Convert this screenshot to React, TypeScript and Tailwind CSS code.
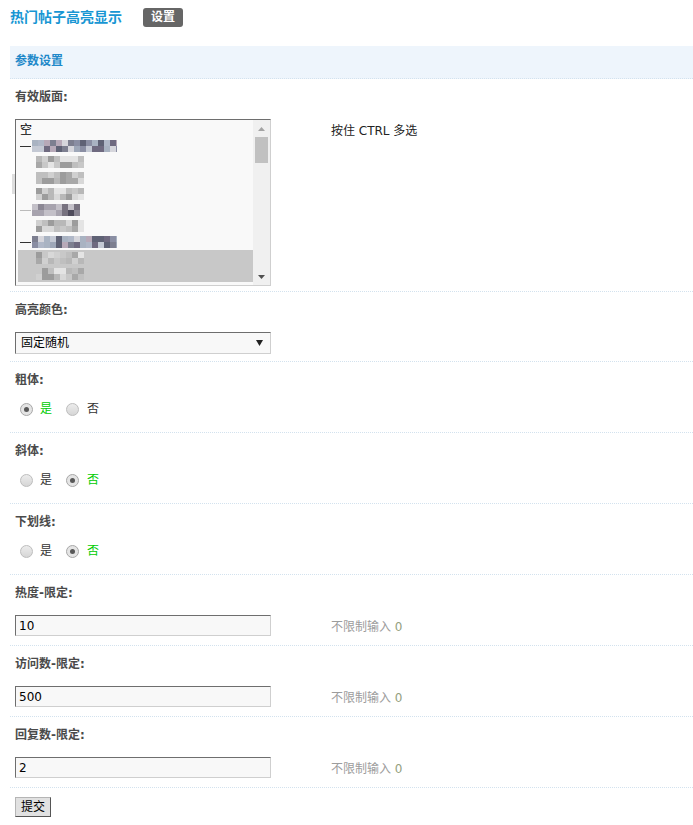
import React from "react";

type Tone = "light" | "mixed" | "dark";

const PALETTES: Record<Tone, string[]> = {
  light: ["#c8c8c8", "#b8b8b8", "#d8d8d8", "#a8a8a8", "#e4e4e4", "#bfbfbf", "#9c9c9c", "#d0d0d0"],
  mixed: ["#9ea7b8", "#7d7f90", "#b7a9b8", "#8a8ea3", "#c4c9d4", "#6f6a80", "#a9b3c2", "#d6d6dc", "#5f6275", "#b0b8c8"],
  dark: ["#8b8794", "#5d5a6b", "#a7a3ae", "#c3c0c8", "#77727f", "#4f4c5c"],
};

// Pixelated placeholder for board names that are hidden in the list
function Mosaic({ w, seed, tone }: { w: number; seed: number; tone: Tone }) {
  const cols = Math.ceil(w / 6);
  let s = seed;
  const rnd = () => {
    s = (s * 9301 + 49297) % 233280;
    return s / 233280;
  };
  const cells: React.ReactNode[] = [];
  const pal = PALETTES[tone];
  for (let r = 0; r < 2; r++) {
    for (let c = 0; c < cols; c++) {
      cells.push(
        <rect key={`${r}-${c}`} x={c * 6} y={r * 6} width={6} height={6} fill={pal[Math.floor(rnd() * pal.length)]} />
      );
    }
  }
  return (
    <svg width={w} height={12} className="block shrink-0">
      {cells}
    </svg>
  );
}

type Item = { text?: string; dash?: "dark" | "light"; indent?: boolean; w?: number; tone?: Tone; seed?: number; selected?: boolean };

const BOARDS: Item[] = [
  { text: "空" },
  { dash: "dark", w: 85, tone: "mixed", seed: 11 },
  { indent: true, w: 48, tone: "light", seed: 23 },
  { indent: true, w: 48, tone: "light", seed: 37 },
  { indent: true, w: 48, tone: "light", seed: 41 },
  { dash: "light", w: 48, tone: "dark", seed: 59 },
  { indent: true, w: 48, tone: "light", seed: 67 },
  { dash: "dark", w: 85, tone: "mixed", seed: 73 },
  { indent: true, w: 48, tone: "light", seed: 89, selected: true },
  { indent: true, w: 48, tone: "light", seed: 97, selected: true },
];

function BoardList() {
  return (
    <div className="relative flex h-[167px] w-[256px] border border-t-[#6e6e6e] border-l-[#6e6e6e] border-r-[#cfcfcf] border-b-[#cfcfcf] bg-[#f9f9f9]">
      <span className="absolute left-[-4px] top-[54px] h-[20px] w-[3px] bg-[#dedede]" />
      <div className="flex-1 overflow-hidden pl-[2px] pt-[2px]">
        {BOARDS.map((b, i) => (
          <div
            key={i}
            className={`flex h-[16px] items-center px-[2px] leading-[16px] text-black ${b.selected ? "bg-[#c8c8c8]" : ""}`}
          >
            {b.text ? (
              <span>{b.text}</span>
            ) : (
              <>
                {b.dash ? (
                  <span className={`mr-[1px] block h-[1px] w-[11px] ${b.dash === "dark" ? "bg-[#333]" : "bg-[#bbb]"}`} />
                ) : (
                  <span className="block w-[16px]" />
                )}
                <Mosaic w={b.w ?? 48} seed={b.seed ?? 1} tone={b.tone ?? "light"} />
              </>
            )}
          </div>
        ))}
      </div>
      {/* scrollbar */}
      <div className="flex w-[17px] flex-col bg-[#f0f0f0]">
        <div className="flex h-[17px] items-center justify-center">
          <svg width="7" height="4" viewBox="0 0 7 4">
            <path d="M3.5 0 L7 4 L0 4 Z" fill="#a3a3a3" />
          </svg>
        </div>
        <div className="mx-[2px] h-[26px] bg-[#c1c1c1]" />
        <div className="flex-1" />
        <div className="flex h-[17px] items-center justify-center">
          <svg width="7" height="4" viewBox="0 0 7 4">
            <path d="M0 0 L7 0 L3.5 4 Z" fill="#505050" />
          </svg>
        </div>
      </div>
    </div>
  );
}

function Dropdown({ value }: { value: string }) {
  return (
    <div className="flex h-[22px] w-[256px] items-center justify-between border border-t-[#6e6e6e] border-l-[#6e6e6e] border-r-[#cfcfcf] border-b-[#cfcfcf] bg-[#f8f8f8] pl-[5px] pr-[7px] text-black">
      <span className="leading-[20px]">{value}</span>
      <svg width="7" height="6" viewBox="0 0 7 6">
        <path d="M0 0 L7 0 L3.5 6 Z" fill="#222" />
      </svg>
    </div>
  );
}

function TextBox({ value }: { value: string }) {
  return (
    <input
      readOnly
      value={value}
      className="block h-[21px] w-[256px] border border-t-[#6e6e6e] border-l-[#6e6e6e] border-r-[#cfcfcf] border-b-[#cfcfcf] bg-[#f8f8f8] pl-[3px] text-[12px] leading-[19px] text-black outline-none"
    />
  );
}

function Radio({ checked }: { checked: boolean }) {
  return (
    <span
      className={`flex size-[13px] shrink-0 items-center justify-center rounded-full border ${
        checked ? "border-[#a8a8a8] bg-[#e4e4e4]" : "border-[#bdbdbd] bg-[linear-gradient(#ececec,#d6d6d6)]"
      }`}
    >
      {checked && <span className="size-[5px] rounded-full bg-[#585858]" />}
    </span>
  );
}

function YesNo({ yes }: { yes: boolean }) {
  return (
    <div className="flex h-[14px] items-center pl-[5px]">
      <Radio checked={yes} />
      <span className={`ml-[7px] leading-[14px] ${yes ? "text-[#00cc00]" : "text-[#333]"}`}>是</span>
      <span className="ml-[14px]">
        <Radio checked={!yes} />
      </span>
      <span className={`ml-[8px] leading-[14px] ${!yes ? "text-[#00cc00]" : "text-[#333]"}`}>否</span>
    </div>
  );
}

function Field({
  label,
  children,
  hint,
  pad,
}: {
  label: string;
  children: React.ReactNode;
  hint?: React.ReactNode;
  pad: string;
}) {
  return (
    <div className="border-b border-dotted border-[#d3e2ee]">
      <div className="pb-[13px] pl-[5px] pt-[9px] font-bold leading-[18px] text-[#4a4a4a]">{label}</div>
      <div className={`flex ${pad}`}>
        <div className="w-[315px] shrink-0 pl-[5px]">{children}</div>
        {hint && <div className="pl-[6px] pt-[4px] leading-[16px]">{hint}</div>}
      </div>
    </div>
  );
}

function NoLimit() {
  return (
    <span className="text-[#9c9c9c]">
      不限制输入 <span className="text-[#94a07e]">0</span>
    </span>
  );
}

export default function App() {
  return (
    <div className="min-h-[825px] bg-white pl-[10px] font-['DejaVu_Sans','Noto_Sans_CJK_SC',sans-serif] text-[12px] text-[#333]">
      {/* page title */}
      <div className="mt-[8px] flex h-[19px] items-center">
        <h1 className="text-[14px] font-bold leading-[19px] text-[#1896d3]">热门帖子高亮显示</h1>
        <span className="ml-[21px] rounded-[3px] bg-[#666] px-[8px] font-bold leading-[19px] text-white">设置</span>
      </div>

      <div className="mt-[19px] h-[33px] border-b border-dotted border-[#d3e2ee] bg-[#eef5fc] pl-[5px] font-bold leading-[31px] text-[#2088c9]">
        参数设置
      </div>

      <Field
        label="有效版面:"
        pad="pb-[5px]"
        hint={<span className="text-[#222]">按住 CTRL 多选</span>}
      >
        <BoardList />
      </Field>

      <Field label="高亮颜色:" pad="pb-[7px]">
        <Dropdown value="固定随机" />
      </Field>

      <Field label="粗体:" pad="pb-[16px]">
        <YesNo yes={true} />
      </Field>

      <Field label="斜体:" pad="pb-[16px]">
        <YesNo yes={false} />
      </Field>

      <Field label="下划线:" pad="pb-[16px]">
        <YesNo yes={false} />
      </Field>

      <Field label="热度-限定:" pad="pb-[9px]" hint={<NoLimit />}>
        <TextBox value="10" />
      </Field>

      <Field label="访问数-限定:" pad="pb-[9px]" hint={<NoLimit />}>
        <TextBox value="500" />
      </Field>

      <Field label="回复数-限定:" pad="pb-[9px]" hint={<NoLimit />}>
        <TextBox value="2" />
      </Field>

      <div className="pl-[5px] pt-[9px]">
        <button className="h-[20px] border border-t-[#b5b5b5] border-l-[#b5b5b5] border-r-[#555] border-b-[#555] bg-[#e1e1e1] px-[5px] text-[12px] leading-[18px] text-black">
          提交
        </button>
      </div>
    </div>
  );
}
